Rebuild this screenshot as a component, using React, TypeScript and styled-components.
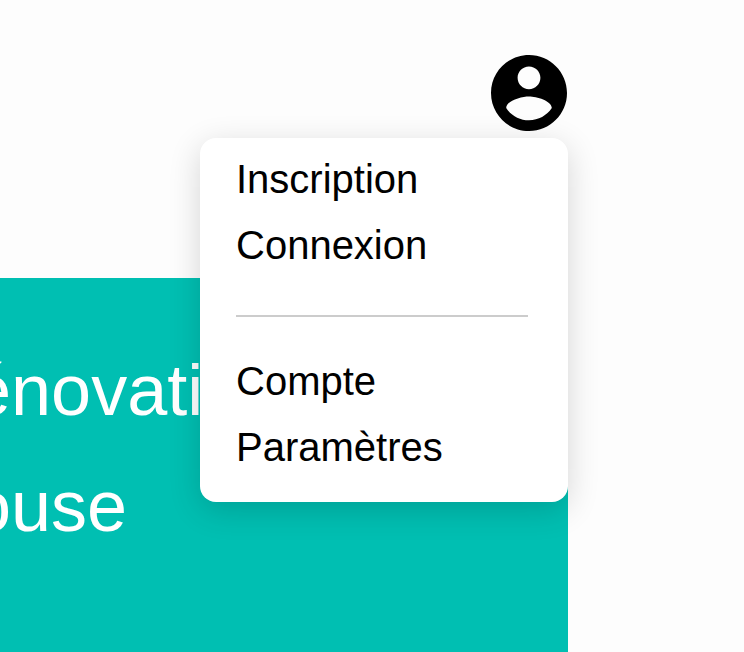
import React from 'react';
import styled, { createGlobalStyle } from 'styled-components';

const GlobalStyle = createGlobalStyle`
  html, body { margin: 0; padding: 0; background: #fdfdfd; overflow: hidden; }
  body { font-family: 'Liberation Sans', Arial, sans-serif; }
`;

const Page = styled.div`
  position: relative;
  width: 744px;
  height: 652px;
  overflow: hidden;
  background: #fdfdfd;
`;

const Content = styled.div`
  width: 568px;
`;

const Header = styled.header`
  height: 278px;
  box-sizing: border-box;
  padding: 55px 1px 0 0;
  display: flex;
  justify-content: flex-end;
  align-items: flex-start;
`;

const AvatarButton = styled.button`
  width: 76px;
  height: 76px;
  padding: 0;
  border: none;
  background: none;
  color: #000;
  display: block;
  svg { display: block; width: 76px; height: 76px; }
`;

const Hero = styled.section`
  height: 374px;
  background: #00bfb2;
  overflow: hidden;
  box-sizing: border-box;
  padding-top: 54px;
`;

const HeroTitle = styled.h1`
  margin: 0 0 0 -29px;
  width: 400px;
  color: #fff;
  font-size: 72px;
  font-weight: 400;
  line-height: 116px;
  white-space: nowrap;
`;

const Menu = styled.nav`
  position: absolute;
  left: 200px;
  top: 138px;
  width: 368px;
  height: 364px;
  box-sizing: border-box;
  padding: 8px 40px 0 36px;
  background: #fff;
  border-radius: 16px;
  box-shadow: 0 8px 32px rgba(0, 0, 0, 0.16);
`;

const MenuItem = styled.a`
  display: block;
  height: 66px;
  line-height: 66px;
  font-size: 40px;
  color: #000;
`;

const Divider = styled.hr`
  height: 2px;
  margin: 37px 0 31px;
  border: none;
  background: #cccccc;
`;

export default function App() {
  return (
    <Page>
      <GlobalStyle />
      <Content>
        <Header>
          <AvatarButton aria-label="Compte">
            <svg viewBox="2 2 20 20" fill="currentColor">
              <path d="M12 2C6.48 2 2 6.48 2 12s4.48 10 10 10 10-4.48 10-10S17.52 2 12 2zm0 3c1.66 0 3 1.34 3 3s-1.34 3-3 3-3-1.34-3-3 1.34-3 3-3zm0 14.2c-2.5 0-4.71-1.28-6-3.22.03-1.99 4-3.08 6-3.08 1.99 0 5.97 1.09 6 3.08-1.29 1.94-3.5 3.22-6 3.22z" />
            </svg>
          </AvatarButton>
        </Header>
        <Hero>
          <HeroTitle>
            énovation
            <br />
            ouse
          </HeroTitle>
        </Hero>
      </Content>
      <Menu>
        <MenuItem>Inscription</MenuItem>
        <MenuItem>Connexion</MenuItem>
        <Divider />
        <MenuItem>Compte</MenuItem>
        <MenuItem>Paramètres</MenuItem>
      </Menu>
    </Page>
  );
}
